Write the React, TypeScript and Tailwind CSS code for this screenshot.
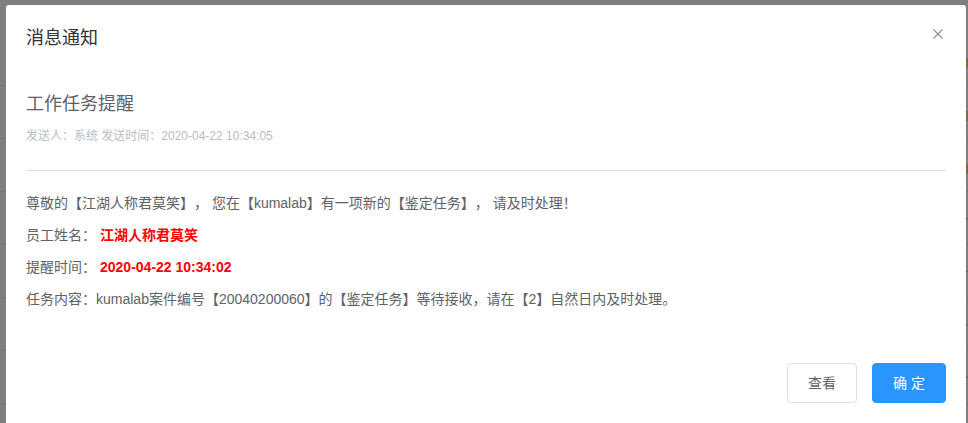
import React from "react";

const font = { fontFamily: '"Liberation Sans", "Noto Sans CJK SC", sans-serif' };

export default function App() {
  const rows = Array.from({ length: 8 });
  return (
    <div className="relative w-[968px] h-[423px] overflow-hidden bg-[#7f7f7f] [text-spacing-trim:space-all]" style={font}>
      {/* background page behind the overlay */}
      <div className="flex flex-col pt-[33px]">
        {rows.map((_, i) => (
          <div key={i} className="h-[53px] border-b border-[#737373] flex justify-end items-center">
            <div className={i < 3 ? "w-[3px] h-[10px] bg-[#7a6a4a] mt-[8px]" : "w-[3px] h-[1px] bg-[#6a5a4a]"} />
          </div>
        ))}
      </div>

      {/* dialog */}
      <div className="absolute left-[6px] top-[5px] w-[960px] h-[430px] bg-white rounded-[3px] flex flex-col">
        <div className="flex justify-between items-start pl-5 pr-[23px] pt-[21px] pb-[10px]">
          <span className="text-[18px] leading-6 text-[#303133]">消息通知</span>
          <svg width="10" height="10" viewBox="0 0 10 10" className="mt-[3px]">
            <path d="M0.5 0.5 L9.5 9.5 M9.5 0.5 L0.5 9.5" stroke="#909399" strokeWidth="1.2" fill="none" />
          </svg>
        </div>
        <div className="px-5 flex flex-col">
          <div className="mt-[32px] text-[18px] leading-6 text-[#606266]">工作任务提醒</div>
          <div className="mt-[12px] text-[12px] leading-4 text-[#b8bcc5]">发送人：系统 发送时间：2020-04-22 10:34:05</div>
          <div className="mt-[26px] h-px bg-[#dcdfe6]" />
          <div className="mt-[22px] flex flex-col gap-3 text-[14px] leading-5 text-[#606266]">
            <p>尊敬的【江湖人称君莫笑】， 您在【kumalab】有一项新的【鉴定任务】， 请及时处理！</p>
            <p>
              员工姓名：<span className="ml-1 font-bold text-[#ff0000]">江湖人称君莫笑</span>
            </p>
            <p>
              提醒时间：<span className="ml-1 font-bold text-[#ff0000]">2020-04-22 10:34:02</span>
            </p>
            <p>任务内容：kumalab案件编号【20040200060】的【鉴定任务】等待接收，请在【2】自然日内及时处理。</p>
          </div>
          <div className="mt-[54px] flex justify-end gap-[15px]">
            <button className="h-[40px] px-5 border border-[#dcdfe6] rounded-[4px] bg-white text-[14px] leading-[14px] text-[#606266]">查看</button>
            <button className="h-[40px] px-5 border border-[#2a95ff] rounded-[4px] bg-[#2a95ff] text-[14px] leading-[14px] text-white">确 定</button>
          </div>
        </div>
      </div>
    </div>
  );
}
